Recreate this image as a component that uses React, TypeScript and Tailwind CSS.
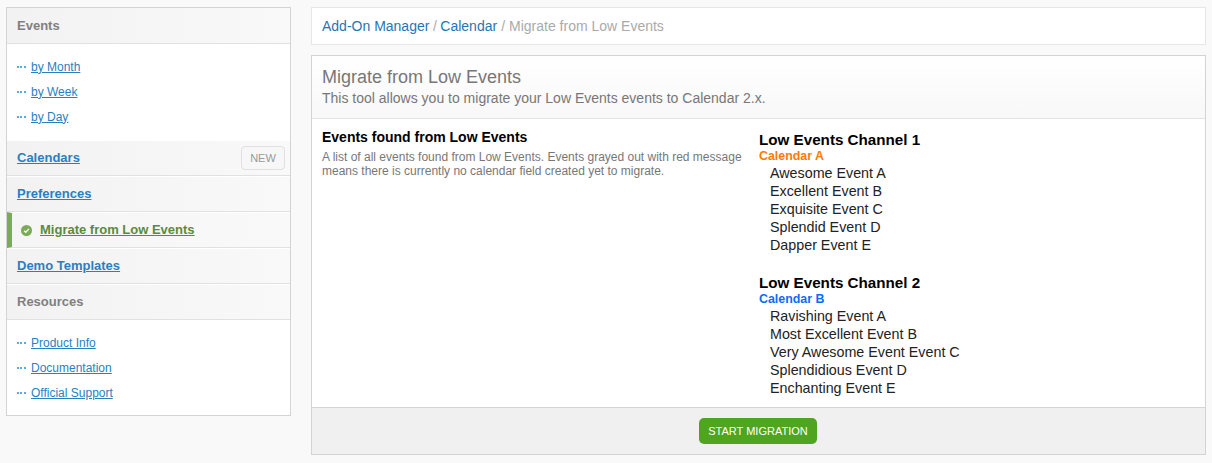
import React from 'react';

const font = { fontFamily: '"Liberation Sans", Arial, sans-serif' };

const SubLink: React.FC<{ label: string }> = ({ label }) => (
    <li className="flex items-center h-[25px]">
        <span className="w-[9px] h-[2px] mr-[5px] border-t-2 border-dotted border-[#5aa9e0]"></span>
        <a href="#" className="text-[12px] text-[#2a7fc1] underline">{label}</a>
    </li>
);

const NavRow: React.FC<{ children: React.ReactNode }> = ({ children }) => (
    <div className="h-[36px] flex items-center border-b border-[#e1e1e1] bg-gradient-to-r from-[#f2f2f2] to-[#f9f9f9] pl-[10px] pr-[5px] border-t border-t-white">
        {children}
    </div>
);

const EventGroup: React.FC<{ channel: string; calendar: string; color: string; events: string[] }> = ({ channel, calendar, color, events }) => (
    <div className="mb-[20px] last:mb-0">
        <h3 className="text-[15.2px] leading-[18px] font-bold text-black">{channel}</h3>
        <div className={`text-[12.4px] leading-[15px] font-bold ${color}`}>{calendar}</div>
        <ul className="pl-[11px] text-[14.3px] leading-[18px] text-[#222]">
            {events.map((e) => <li key={e}>{e}</li>)}
        </ul>
    </div>
);

export default function App() {
    return (
        <div style={font} className="w-[1212px] h-[463px] bg-[#f9f9f9] flex items-start overflow-hidden pt-[7px] pl-[6px]">
            <aside className="w-[285px] border border-[#d4d4d4] bg-white shrink-0">
                <div className="h-[36px] flex items-center border-b border-[#e1e1e1] bg-gradient-to-r from-[#f2f2f2] to-[#f9f9f9] pl-[10px] text-[13px] font-bold text-[#808080]">Events</div>
                <ul className="pl-[10px] pt-[10px] h-[96px]">
                    <SubLink label="by Month" />
                    <SubLink label="by Week" />
                    <SubLink label="by Day" />
                </ul>
                <NavRow>
                    <a href="#" className="text-[13px] font-bold text-[#2a7fc1] underline">Calendars</a>
                    <span className="ml-auto w-[44px] h-[24px] flex items-center justify-center rounded-[4px] border border-[#e0e0e0] text-[11px] text-[#999] bg-[#f7f7f7]">NEW</span>
                </NavRow>
                <NavRow>
                    <a href="#" className="text-[13px] font-bold text-[#2a7fc1] underline">Preferences</a>
                </NavRow>
                <div className="h-[36px] flex items-center border-b border-t border-t-white border-[#e1e1e1] border-l-[5px] border-l-[#7aab55] bg-gradient-to-r from-[#f5f5f5] to-[#f9f9f9] pl-[9px]">
                    <svg viewBox="0 0 12 12" className="w-[11px] h-[11px] mr-[8px]">
                        <circle cx="6" cy="6" r="6" fill="#7aab55" />
                        <path d="M3.4 6.2 5.2 8 8.6 4.4" fill="none" stroke="#fff" strokeWidth="1.5" />
                    </svg>
                    <a href="#" className="text-[13px] font-bold text-[#5b8a3c] underline">Migrate from Low Events</a>
                </div>
                <NavRow>
                    <a href="#" className="text-[13px] font-bold text-[#2a7fc1] underline">Demo Templates</a>
                </NavRow>
                <NavRow>
                    <span className="text-[13px] font-bold text-[#808080]">Resources</span>
                </NavRow>
                <ul className="pl-[10px] pt-[10px] h-[95px]">
                    <SubLink label="Product Info" />
                    <SubLink label="Documentation" />
                    <SubLink label="Official Support" />
                </ul>
            </aside>

            <main className="w-[895px] ml-[20px] shrink-0">
                <nav className="h-[38px] flex items-center border border-[#e6e6e6] bg-white pl-[10px] text-[14px] text-[#aaa]">
                    <a href="#" className="text-[#1f75b5]">Add-On Manager</a>
                    <span className="mx-[3.5px]">/</span>
                    <a href="#" className="text-[#1f75b5]">Calendar</a>
                    <span className="mx-[4px]">/</span>
                    <span>Migrate from Low Events</span>
                </nav>
                <section className="mt-[10px] h-[400px] border border-[#d4d4d4] bg-white flex flex-col">
                    <header className="h-[63px] shrink-0 border-b border-[#e3e3e3] bg-gradient-to-b from-white to-[#f8f8f8] pl-[10px] pt-[11px]">
                        <h1 className="text-[18px] leading-[21px] text-[#777]">Migrate from Low Events</h1>
                        <p className="text-[14px] leading-[20px] text-[#777]">This tool allows you to migrate your Low Events events to Calendar 2.x.</p>
                    </header>
                    <div className="flex-1 min-h-0 flex pl-[10px] pt-[10px]">
                        <div className="w-[437px] shrink-0">
                            <h2 className="text-[14px] leading-[16px] font-bold text-black">Events found from Low Events</h2>
                            <p className="mt-[5px] w-[436px] text-[12px] leading-[14px] text-[#777]">A list of all events found from Low Events. Events grayed out with red message means there is currently no calendar field created yet to migrate.</p>
                        </div>
                        <div className="pt-[2px]">
                            <EventGroup channel="Low Events Channel 1" calendar="Calendar A" color="text-[#ff7a00]" events={['Awesome Event A', 'Excellent Event B', 'Exquisite Event C', 'Splendid Event D', 'Dapper Event E']} />
                            <EventGroup channel="Low Events Channel 2" calendar="Calendar B" color="text-[#0a6cff]" events={['Ravishing Event A', 'Most Excellent Event B', 'Very Awesome Event Event C', 'Splendidious Event D', 'Enchanting Event E']} />
                        </div>
                    </div>
                    <footer className="h-[47px] shrink-0 border-t border-[#d4d4d4] bg-[#f0f0f0] flex items-center justify-center pr-[1px]">
                        <button className="w-[118px] h-[26px] rounded-[5px] bg-[#4fa520] text-white text-[11px]">START MIGRATION</button>
                    </footer>
                </section>
            </main>
        </div>
    );
}
